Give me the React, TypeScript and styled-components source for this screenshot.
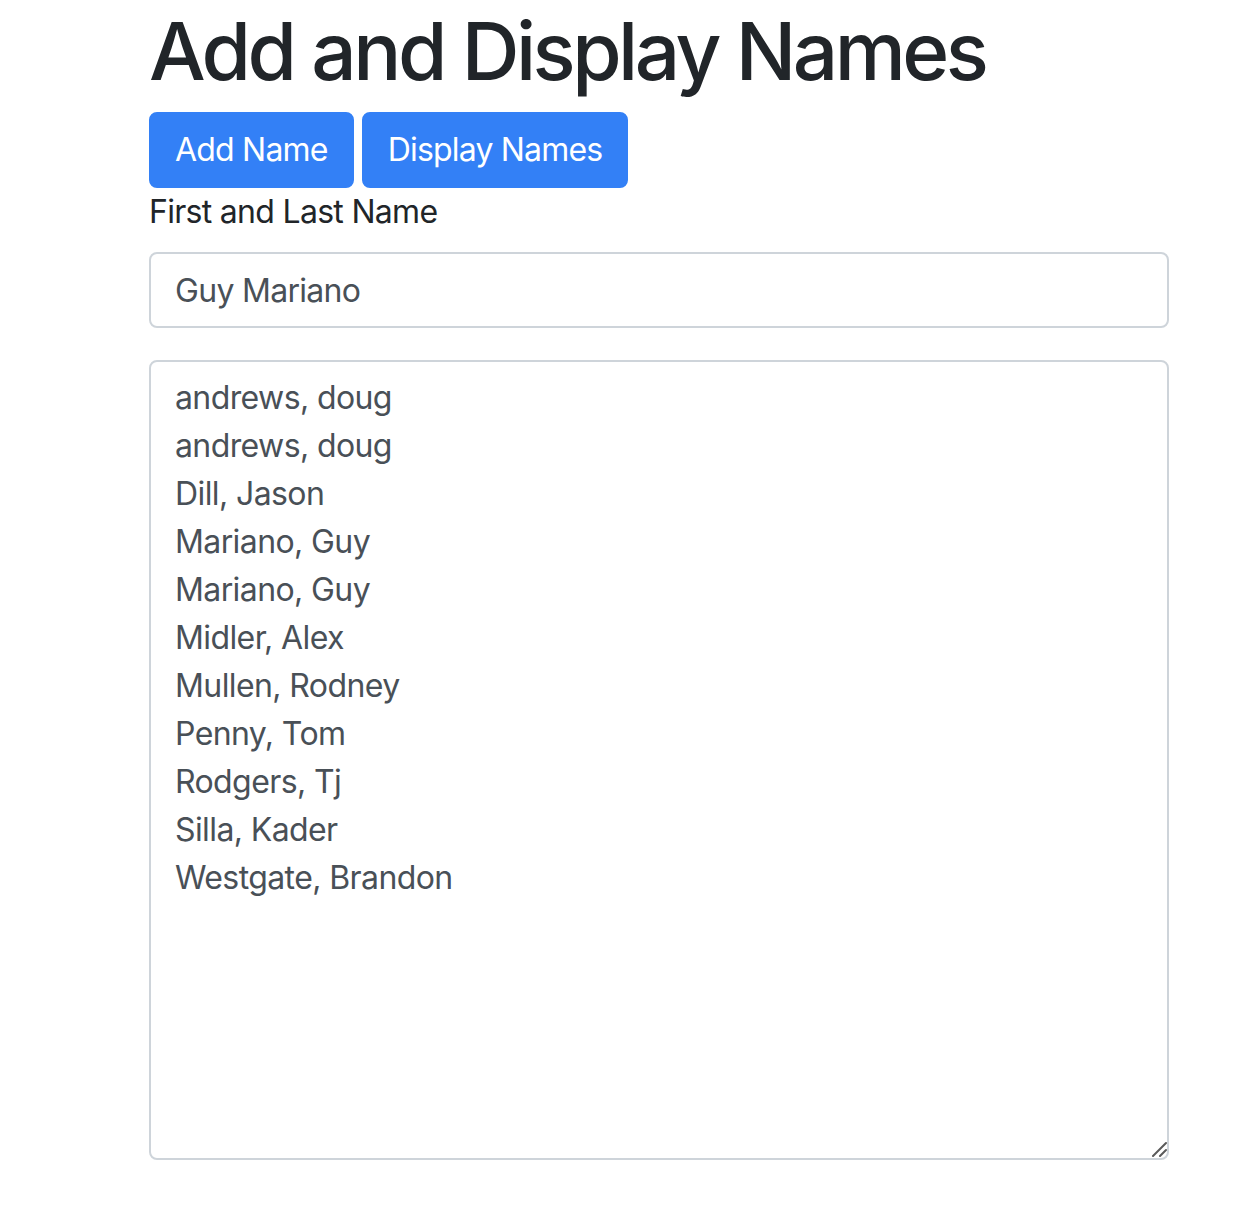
import React from "react";
import styled, { createGlobalStyle } from "styled-components";

const GlobalStyle = createGlobalStyle`
  body {
    margin: 0;
    background: #fff;
    font-family: Inter, "Noto Sans", "Liberation Sans", sans-serif;
    color: #212529;
  }
`;

const Container = styled.div`
  width: 1020px;
  margin-left: 149px;
  padding-bottom: 70px;
`;

const Title = styled.h1`
  margin: 3px 0 13px;
  font-size: 80px;
  font-weight: 500;
  line-height: 96px;
  letter-spacing: -3.5px;
  color: #212529;
`;

const ButtonRow = styled.div`
  display: flex;
  gap: 8px;
`;

const Button = styled.button`
  height: 76px;
  padding: 0 24px;
  border: 2px solid #3380f6;
  border-radius: 8px;
  background: #3380f6;
  color: #fff;
  font-family: inherit;
  font-size: 32px;
  line-height: 48px;
  letter-spacing: -0.8px;
  cursor: pointer;
`;

const Label = styled.label`
  display: inline-block;
  margin-bottom: 16px;
  font-size: 32px;
  line-height: 48px;
  letter-spacing: -0.7px;
  color: #212529;
`;

const FormGroup = styled.div`
  margin-bottom: 32px;
`;

const Input = styled.input`
  display: block;
  box-sizing: border-box;
  width: 100%;
  height: 76px;
  padding: 12px 24px;
  border: 2px solid #ced4da;
  border-radius: 8px;
  font-family: inherit;
  font-size: 32px;
  line-height: 48px;
  letter-spacing: -0.7px;
  color: #495057;
  outline: none;
`;

const ListBox = styled.div`
  position: relative;
`;

const NameList = styled.textarea`
  display: block;
  box-sizing: border-box;
  width: 100%;
  height: 800px;
  padding: 12px 24px;
  border: 2px solid #ced4da;
  border-radius: 8px;
  font-family: inherit;
  font-size: 32px;
  line-height: 48px;
  letter-spacing: -0.6px;
  color: #495057;
  outline: none;
  resize: none;
`;

const Grip = styled.svg`
  position: absolute;
  right: 2px;
  bottom: 3px;
  width: 16px;
  height: 16px;
  pointer-events: none;
`;

const names = [
  "andrews, doug",
  "andrews, doug",
  "Dill, Jason",
  "Mariano, Guy",
  "Mariano, Guy",
  "Midler, Alex",
  "Mullen, Rodney",
  "Penny, Tom",
  "Rodgers, Tj",
  "Silla, Kader",
  "Westgate, Brandon",
];

const App = (): JSX.Element => {
  const [name, setName] = React.useState("Guy Mariano");

  return (
    <React.Fragment>
      <GlobalStyle />
      <Container>
        <Title>Add and Display Names</Title>
        <ButtonRow>
          <Button>Add Name</Button>
          <Button>Display Names</Button>
        </ButtonRow>
        <Label htmlFor="fullName">First and Last Name</Label>
        <FormGroup>
          <Input
            id="fullName"
            value={name}
            onChange={(event) => setName(event.target.value)}
          />
        </FormGroup>
        <ListBox>
          <NameList readOnly value={names.join("\n")} />
          <Grip viewBox="0 0 16 16">
            <path
              d="M2 15 L15 2 M9 15 L15 9"
              stroke="#5a5a5a"
              strokeWidth="2"
              strokeLinecap="round"
            />
          </Grip>
        </ListBox>
      </Container>
    </React.Fragment>
  );
};

export default App;
